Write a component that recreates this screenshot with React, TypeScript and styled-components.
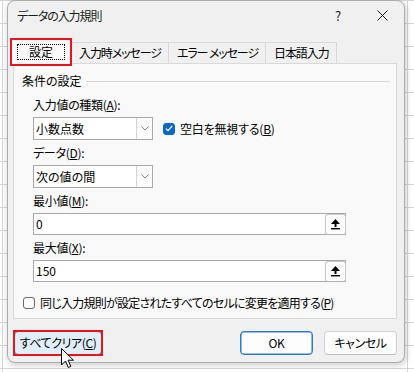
import React from "react";
import styled, { createGlobalStyle, css } from "styled-components";

const GlobalStyle = createGlobalStyle`
  html, body { margin: 0; padding: 0; }
  body {
    width: 414px;
    height: 372px;
    overflow: hidden;
    background-color: #ffffff;
    background-image:
      linear-gradient(to right, #d6d6d6 1px, transparent 1px),
      linear-gradient(to bottom, #d6d6d6 1px, transparent 1px);
    background-size: 405px 100%, 100% 23px;
    background-position: 2px 0, 0 0;
    font-family: "Noto Sans CJK JP", "Noto Sans", sans-serif;
    font-feature-settings: "palt";
    color: #000;
  }
`;

const Page = styled.div`
  position: relative;
  height: 372px;
  padding-left: 7px;
  box-sizing: border-box;
`;

const Dialog = styled.div`
  width: 398px;
  height: 363px;
  box-sizing: border-box;
  background: #f0f0f0;
  border: 1px solid #acacac;
  border-radius: 8px;
  box-shadow: 1px 2px 6px rgba(0, 0, 0, 0.22);
  display: flex;
  flex-direction: column;
  font-size: 12px;
  line-height: 16px;
`;

const TitleBar = styled.div`
  height: 29px;
  display: flex;
  align-items: center;
  padding-left: 9px;
`;

const Title = styled.div`
  flex: 1;
  font-size: 12px;
  letter-spacing: -1.1px;
  color: #1a1a1a;
`;

const TitleButton = styled.div`
  width: 44px;
  height: 29px;
  display: flex;
  align-items: center;
  justify-content: center;
  color: #1a1a1a;
  font-size: 13px;
`;

const Body = styled.div`
  flex: 1;
  display: flex;
  flex-direction: column;
  padding: 0 7px 0 5px;
`;

const TabRow = styled.div`
  margin-top: 9px;
  height: 24px;
  display: flex;
  align-items: flex-end;
  position: relative;
  z-index: 1;
`;

const Marked = css`
  position: relative;
  &::after {
    content: "";
    position: absolute;
    inset: -2px;
    border: 2px solid #e8141c;
    pointer-events: none;
  }
`;

const Tab = styled.div<{ $active?: boolean }>`
  box-sizing: border-box;
  display: flex;
  align-items: center;
  justify-content: center;
  border: 1px solid #d9d9d9;
  border-bottom: none;
  white-space: nowrap;
  letter-spacing: -1.1px;
  ${(p) =>
    p.$active
      ? css`
          height: 25px;
          margin-bottom: -1px;
          width: 60px;
          margin-left: -2px;
          background: #f9f9f9;
          letter-spacing: 0;
          ${Marked}
        `
      : css`
          height: 21px;
          padding: 0 7px 0 8px;
          background: #f0f0f0;
          margin-left: -1px;
        `}
`;

const FocusRect = styled.span`
  padding: 0 11px;
  height: 16px;
  border: 1px dotted #000;
  box-sizing: border-box;
  display: flex;
  align-items: center;
`;

const Panel = styled.div`
  height: 256px;
  box-sizing: border-box;
  border: 1px solid #d9d9d9;
  background: #f9f9f9;
  padding: 9px 6px 0 8px;
  display: flex;
  flex-direction: column;
`;

const GroupHeader = styled.div`
  height: 16px;
  display: flex;
  align-items: center;
  gap: 4px;
`;

const GroupLine = styled.div`
  flex: 1;
  height: 1px;
  background: #d6d6d6;
`;

const GroupBody = styled.div`
  padding-left: 11px;
  display: flex;
  flex-direction: column;
`;

const Field = styled.div<{ $first?: boolean }>`
  margin-top: ${(p) => (p.$first ? 8 : 5)}px;
  display: flex;
  flex-direction: column;
  gap: 4px;
`;

const FieldLabel = styled.div`
  height: 16px;
  letter-spacing: -0.3px;
`;

const Key = styled.u`
  text-underline-offset: 1px;
`;

const ControlRow = styled.div`
  display: flex;
  align-items: center;
`;

const Select = styled.div`
  width: 120px;
  height: 23px;
  box-sizing: border-box;
  border: 1px solid #a8a8a8;
  background: #fff;
  display: flex;
`;

const SelectValue = styled.div`
  flex: 1;
  padding-left: 2px;
  display: flex;
  align-items: center;
`;

const DropButton = styled.div`
  width: 16px;
  box-sizing: border-box;
  border-left: 1px solid #d4d4d4;
  background: #fdfdfd;
  display: flex;
  align-items: center;
  justify-content: center;
`;

const CheckRow = styled.label<{ $gapLeft?: number }>`
  display: flex;
  align-items: center;
  gap: 5px;
  margin-left: ${(p) => p.$gapLeft ?? 0}px;
  height: 16px;
`;

const CheckText = styled.span<{ $ls: number }>`
  letter-spacing: ${(p) => p.$ls}px;
  white-space: nowrap;
`;

const CheckBox = styled.span<{ $checked?: boolean }>`
  width: 12px;
  height: 12px;
  box-sizing: border-box;
  border-radius: 3px;
  display: flex;
  align-items: center;
  justify-content: center;
  ${(p) =>
    p.$checked
      ? css`
          background: #0f67c4;
          border: 1px solid #0f67c4;
        `
      : css`
          background: #fbfbfb;
          border: 1px solid #6a6a6a;
        `}
`;

const TextInput = styled.div`
  width: 313px;
  height: 22px;
  box-sizing: border-box;
  border: 1px solid #a8a8a8;
  background: #fff;
  display: flex;
  align-items: center;
`;

const InputValue = styled.div`
  flex: 1;
  padding-left: 2px;
`;

const RefButton = styled.div`
  width: 21px;
  height: 21px;
  margin-right: -1px;
  box-sizing: border-box;
  border: 1px solid #c6c6c6;
  border-bottom-color: #b0b0b0;
  border-radius: 3px;
  background: #fdfdfd;
  display: flex;
  align-items: center;
  justify-content: center;
`;

const BottomCheck = styled.div`
  margin-top: 13px;
  padding-left: 1px;
`;

const Footer = styled.div`
  margin-top: 12px;
  display: flex;
  align-items: center;
  padding-left: 1px;
`;

const Spacer = styled.div`
  flex: 1;
`;

const Button = styled.div<{ $variant?: "default" | "hover" | "normal"; $marked?: boolean }>`
  height: 24px;
  box-sizing: border-box;
  border-radius: 4px;
  display: flex;
  align-items: center;
  justify-content: center;
  font-size: 12px;
  letter-spacing: -0.4px;
  ${(p) =>
    p.$variant === "hover"
      ? css`
          width: 88px;
          background: #e0eef9;
          border: 1px solid #2f82d2;
        `
      : p.$variant === "default"
      ? css`
          width: 73px;
          background: #fdfdfd;
          border: 1px solid #2b7bcc;
          box-shadow: inset 0 0 0 0.5px #2b7bcc;
        `
      : css`
          width: 73px;
          background: #fdfdfd;
          border: 1px solid #d2d2d2;
          border-bottom-color: #bdbdbd;
        `}
  ${(p) => p.$marked && Marked}
  & + & {
    margin-left: 11px;
  }
`;

const Cursor = styled.svg`
  position: absolute;
  left: 61px;
  top: 348px;
`;

const Chevron = () => (
  <svg width="8" height="5" viewBox="0 0 8 5">
    <polyline points="0.5,0.5 4,4 7.5,0.5" fill="none" stroke="#7a7a7a" strokeWidth="0.9" />
  </svg>
);

const Check = () => (
  <svg width="8" height="7" viewBox="0 0 8 7">
    <polyline points="0.8,3.6 3,5.6 7.2,1" fill="none" stroke="#fff" strokeWidth="1.2" />
  </svg>
);

const RefIcon = () => (
  <svg width="9" height="11" viewBox="0 0 9 11">
    <polygon points="4.5,0 9,5 0,5" fill="#000" />
    <rect x="3.5" y="4" width="2" height="4" fill="#000" />
    <rect x="0" y="9" width="9" height="1.4" fill="#000" />
  </svg>
);

const CloseIcon = () => (
  <svg width="11" height="11" viewBox="0 0 11 11">
    <line x1="0.5" y1="0.5" x2="10.5" y2="10.5" stroke="#1a1a1a" strokeWidth="1" />
    <line x1="10.5" y1="0.5" x2="0.5" y2="10.5" stroke="#1a1a1a" strokeWidth="1" />
  </svg>
);

export default function App() {
  return (
    <>
      <GlobalStyle />
      <Page>
        <Dialog>
          <TitleBar>
            <Title>データの入力規則</Title>
            <TitleButton>?</TitleButton>
            <TitleButton>
              <CloseIcon />
            </TitleButton>
          </TitleBar>
          <Body>
            <TabRow>
              <Tab $active>
                <FocusRect>設定</FocusRect>
              </Tab>
              <Tab>入力時メッセージ</Tab>
              <Tab>エラー メッセージ</Tab>
              <Tab>日本語入力</Tab>
            </TabRow>
            <Panel>
              <GroupHeader>
                <span>条件の設定</span>
                <GroupLine />
              </GroupHeader>
              <GroupBody>
                <Field $first>
                  <FieldLabel>
                    入力値の種類(<Key>A</Key>):
                  </FieldLabel>
                  <ControlRow>
                    <Select>
                      <SelectValue>小数点数</SelectValue>
                      <DropButton>
                        <Chevron />
                      </DropButton>
                    </Select>
                    <CheckRow $gapLeft={10}>
                      <CheckBox $checked>
                        <Check />
                      </CheckBox>
                      <CheckText $ls={-0.2}>
                        空白を無視する(<Key>B</Key>)
                      </CheckText>
                    </CheckRow>
                  </ControlRow>
                </Field>
                <Field>
                  <FieldLabel>
                    データ(<Key>D</Key>):
                  </FieldLabel>
                  <Select>
                    <SelectValue>次の値の間</SelectValue>
                    <DropButton>
                      <Chevron />
                    </DropButton>
                  </Select>
                </Field>
                <Field>
                  <FieldLabel>
                    最小値(<Key>M</Key>):
                  </FieldLabel>
                  <TextInput>
                    <InputValue>0</InputValue>
                    <RefButton>
                      <RefIcon />
                    </RefButton>
                  </TextInput>
                </Field>
                <Field>
                  <FieldLabel>
                    最大値(<Key>X</Key>):
                  </FieldLabel>
                  <TextInput>
                    <InputValue>150</InputValue>
                    <RefButton>
                      <RefIcon />
                    </RefButton>
                  </TextInput>
                </Field>
              </GroupBody>
              <BottomCheck>
                <CheckRow>
                  <CheckBox />
                  <CheckText $ls={-0.75}>
                    同じ入力規則が設定されたすべてのセルに変更を適用する(<Key>P</Key>)
                  </CheckText>
                </CheckRow>
              </BottomCheck>
            </Panel>
            <Footer>
              <Button $variant="hover" $marked>
                すべてクリア(<Key>C</Key>)
              </Button>
              <Spacer />
              <Button $variant="default">OK</Button>
              <Button $variant="normal">キャンセル</Button>
            </Footer>
          </Body>
        </Dialog>
        <Cursor width="14" height="22" viewBox="0 0 14 22">
          <path
            d="M0.5 0.5 L0.5 17 L4.5 13 L7.3 19.5 L9.8 18.4 L7.1 12.2 L12.5 12.2 Z"
            fill="#fff"
            stroke="#000"
            strokeWidth="1"
            strokeLinejoin="round"
          />
        </Cursor>
      </Page>
    </>
  );
}
